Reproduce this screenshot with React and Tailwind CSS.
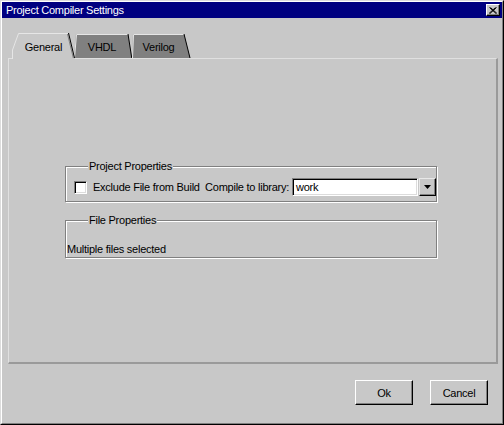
import React from 'react'

const font = "font-['Liberation_Sans',Arial,sans-serif] text-[11px] leading-[13px] tracking-[-0.25px]"

function CloseButton() {
  return (
    <div className="w-[14px] h-[12px] bg-[#c8c8c8] border border-t-white border-l-white border-r-black border-b-black shadow-[inset_-1px_-1px_0_#808080] flex items-center justify-center">
      <svg width="8" height="7" viewBox="0 0 8 7">
        <path d="M0.5 0.5 L7 6.5 M1.5 0.5 L8 6.5 M6.5 0.5 L0 6.5 M7.5 0.5 L1 6.5" stroke="#000" strokeWidth="1" fill="none" />
      </svg>
    </div>
  )
}

function TabStrip() {
  return (
    <div className="relative z-10 h-[25px] flex">
      {/* formas de las pestañas */}
      <svg className="absolute left-0 top-0" width="200" height="26" viewBox="0 0 200 26">
        <polygon points="66,25 68,1 120,1 123.75,25" fill="#808080" />
        <polyline points="66.5,25 68.5,1.5 120,1.5" stroke="#e6e6e6" fill="none" />
        <line x1="120" y1="1" x2="123.75" y2="25" stroke="#000" />

        <polygon points="124,25 125,1 176,1 182,25" fill="#808080" />
        <polyline points="124.5,25 125.5,1.5 176,1.5" stroke="#e6e6e6" fill="none" />
        <line x1="176" y1="1" x2="182" y2="25" stroke="#000" />

        <polygon points="4,26 4,17 10,0 61,0 67,26" fill="#c8c8c8" />
        <polyline points="4.5,26 4.5,17 10.5,0.5 60.5,0.5" stroke="#e6e6e6" fill="none" />
        <line x1="59.5" y1="1" x2="65.3" y2="25" stroke="#808080" />
        <line x1="60.5" y1="0" x2="66.5" y2="25" stroke="#000" />
      </svg>
      <span className="relative ml-[10px] w-[51px] pt-[8px] text-center text-black">General</span>
      <span className="relative ml-[7px] w-[52px] pt-[8px] text-center text-black">VHDL</span>
      <span className="relative ml-[5px] w-[51px] pt-[8px] text-center text-black">Verilog</span>
    </div>
  )
}

function GroupBox({ titulo, className, children }) {
  return (
    <div className={'relative ml-[56px] w-[372px] border border-[#808080] shadow-[inset_1px_1px_0_#fff,1px_1px_0_#fff] ' + className}>
      <span className="absolute top-[-7px] left-[22px] px-[1px] bg-[#c8c8c8] text-black">{titulo}</span>
      {children}
    </div>
  )
}

function Button({ children }) {
  return (
    <button className="w-[58px] h-[25px] bg-[#c8c8c8] border border-t-white border-l-white border-r-black border-b-black shadow-[inset_-1px_-1px_0_#808080] flex items-center justify-center pt-[1px] text-black">
      {children}
    </button>
  )
}

export default function App() {
  return (
    <div className={'w-[504px] h-[425px] bg-[#c8c8c8] border border-t-[#dcdcdc] border-l-[#dcdcdc] border-r-black border-b-black ' + font}>
      <div className="h-full flex flex-col border border-t-white border-l-white border-r-[#808080] border-b-[#808080]">
        {/* Barra de título */}
        <div className="h-[16px] bg-[#000080] flex items-center justify-between pl-[4px] pr-[2px]">
          <span className="text-white pt-[1px]">Project Compiler Settings</span>
          <CloseButton />
        </div>

        <div className="pl-[6px] pr-[4px] pt-[15px]">
          <TabStrip />

          {/* Panel de la pestaña */}
          <div className="h-[306px] border-l border-t border-[#e0e0e0] border-r-2 border-b-2 border-r-[#9a9a9a] border-b-[#9a9a9a] flex flex-col pt-[107px]">
            <GroupBox titulo="Project Properties" className="h-[36px]">
              <div className="flex items-center h-[18px] mt-[11px] pl-[8px]">
                <div className="w-[13px] h-[13px] bg-white border border-t-[#808080] border-l-[#808080] border-r-white border-b-white shadow-[inset_1px_1px_0_#000,inset_-1px_-1px_0_#dcdcdc]" />
                <span className="ml-[6px] text-black">Exclude File from Build</span>
                <span className="flex-1" />
                <span className="text-black">Compile to library:</span>
                <div className="ml-[3px] w-[126px] h-[18px] bg-white border border-t-[#808080] border-l-[#808080] border-r-white border-b-white shadow-[inset_1px_1px_0_#000,inset_-1px_-1px_0_#dcdcdc] flex items-center pl-[3px] text-black">
                  work
                </div>
                <div className="ml-[1px] w-[17px] h-[18px] bg-[#c8c8c8] border border-t-[#e8e8e8] border-l-[#e8e8e8] border-r-black border-b-black shadow-[inset_-1px_-1px_0_#808080] flex items-center justify-center">
                  <svg width="7" height="4" viewBox="0 0 7 4">
                    <polygon points="0,0 7,0 3.5,4" fill="#000" />
                  </svg>
                </div>
              </div>
            </GroupBox>

            <GroupBox titulo="File Properties" className="h-[38px] mt-[18px]">
              <div className="pt-[22px] pl-[1px] text-black">Multiple files selected</div>
            </GroupBox>
          </div>

          {/* Botones */}
          <div className="flex justify-end gap-[17px] mt-[16px] pr-[10px]">
            <Button>Ok</Button>
            <Button>Cancel</Button>
          </div>
        </div>
      </div>
    </div>
  )
}
